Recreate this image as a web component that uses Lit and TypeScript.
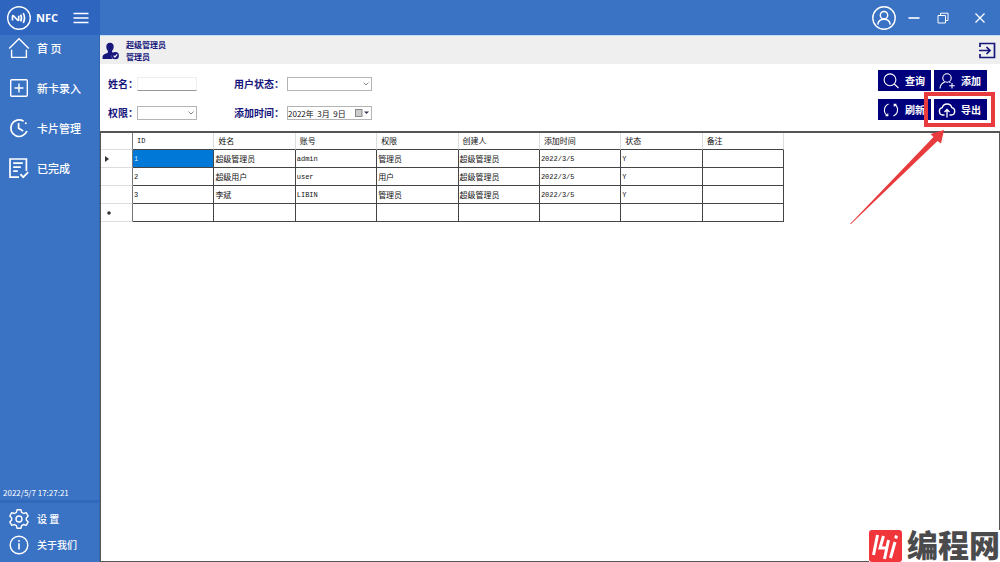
import { LitElement, html, css, svg } from "lit";
import { customElement, state } from "lit/decorators.js";

const icons = {
  nfc: svg`<svg viewBox="0 0 26 26" width="26" height="26"><circle cx="13" cy="13" r="11.3" stroke-width="1.4"/><path stroke-width="1.7" d="M6.5 15.6v-4.200q0-1.600 1.200-.4l3.800 4q1.200 1.200 1.200-.4v-3.800M14.600 9.600q1.800 3.400 0 6.800M17.200 8.200q2.600 4.800 0 9.600"/></svg>`,
  menu: svg`<svg viewBox="0 0 16 14" width="16" height="14"><path stroke-width="1.4" d="M.5 2.5h15M.5 7h15M.5 11.5h15"/></svg>`,
  home: svg`<svg viewBox="0 0 22 22" width="22" height="22"><path d="M1.200 11.600 11 1.800l9.800 9.800M3.600 12.800v7.600h14.800v-7.600"/></svg>`,
  plus: svg`<svg viewBox="0 0 22 22" width="22" height="22"><rect x="2.700" y="2.700" width="16.600" height="16.600" rx="1"/><path d="M11 6.500v9M6.500 11h9"/></svg>`,
  clock: svg`<svg viewBox="0 0 22 22" width="22" height="22"><path stroke-width="1.700" d="M15.600 4.200A8.300 8.300 0 1 0 18.900 14M10.600 6v5.300l4.600 2.700"/><circle cx="17.800" cy="6.300" r="1" fill="currentColor" stroke="none"/></svg>`,
  done: svg`<svg viewBox="0 0 22 22" width="22" height="22"><path stroke-width="1.700" d="M18.400 14V2H2v18.200h9M5.200 6.200h9.600M5.200 10.200h7.600M5.200 14.200h4.600M12.400 17.200l2.800 3 5-5"/></svg>`,
  gear: svg`<svg viewBox="0 0 22 22" width="22" height="22"><path stroke-linejoin="round" d="M9 1.800h4l.6 2.600 2 1.100 2.600-.8 2 3.400-1.900 1.900v2l1.900 1.900-2 3.400-2.600-.8-2 1.200-.6 2.500H9l-.6-2.500-2-1.200-2.600.8-2-3.400L3.700 12v-2L1.800 8.100l2-3.400 2.600.8 2-1.100z"/><circle cx="11" cy="11" r="3"/></svg>`,
  info: svg`<svg viewBox="0 0 22 22" width="22" height="22"><circle cx="11" cy="11" r="8.800"/><path stroke-width="1.600" d="M11 9.300v6.200M11 6v1.800"/></svg>`,
  account: svg`<svg viewBox="0 0 24 24" width="24" height="24"><circle cx="12" cy="12" r="11.200"/><circle cx="12" cy="9.200" r="3.700"/><path d="M5.700 18.600q.7-5.300 6.300-5.300t6.300 5.300"/></svg>`,
  minimize: svg`<svg viewBox="0 0 12 12" width="12" height="12"><path stroke-width="1.600" d="M.5 6h11"/></svg>`,
  restore: svg`<svg viewBox="0 0 12 12" width="12" height="12"><path stroke-width="1" d="M1 3.500h7.500V11H1zM3.500 3.500V1.200H11v7.300H8.500"/></svg>`,
  close: svg`<svg viewBox="0 0 12 12" width="12" height="12"><path stroke-width="1.300" d="m1.500 1.500 9 9M10.500 1.500l-9 9"/></svg>`,
  exit: svg`<svg viewBox="0 0 18 17" width="18" height="17"><path stroke-width="1.700" d="M2 5V1.500h14.500v14H2V12M1 8.500h10.500M8.500 5l3.500 3.500L8.500 12"/></svg>`,
  person: svg`<svg viewBox="0 0 18 18" width="18" height="18"><path fill="currentColor" stroke="none" d="M8 .8c2.500 0 3.900 1.700 3.700 4.100-.1 1.700-.8 2.900-1.500 3.800-.4.600-.2 1.400.6 1.700l1 .4a4.200 4.200 0 0 0-1.300 6.200H1.500c-.8 0-1-.5-1-1.300.1-3 1.700-3.400 4.300-4.400 1.200-.5 1.600-1.600.9-2.500C5 7.800 4.400 6.600 4.300 4.900 4.100 2.500 5.500.8 8 .8z"/><circle cx="13.300" cy="13.700" r="3.600" fill="currentColor" stroke="none"/><path stroke="#efefef" stroke-width="1.200" d="m11.600 13.700 1.300 1.300 2.300-2.600"/></svg>`,
  search: svg`<svg viewBox="0 0 18 18" width="18" height="18"><circle cx="8" cy="7.800" r="5.900"/><path d="m12.200 12 4.300 4"/></svg>`,
  add: svg`<svg viewBox="0 0 18 18" width="18" height="18"><circle cx="9" cy="6" r="4.200"/><path d="M2 16.500q.2-5 4.800-6.600M11.200 9.900l1.300.7M14 11v5.500M11.200 13.800h5.600"/></svg>`,
  refresh: svg`<svg viewBox="0 0 18 18" width="18" height="18"><path d="M6.600 3A6.600 6.600 0 0 0 5.200 14.500M3.500 14.700h2.300v-2.200M11.400 15A6.600 6.600 0 0 0 12.800 3.500M14.500 3.300h-2.300v2.200"/></svg>`,
  upload: svg`<svg viewBox="0 0 18 18" width="18" height="18"><path stroke-width="1.300" d="M6.500 14H4.700a3.700 3.700 0 0 1-.4-7.300 4.900 4.900 0 0 1 9.500 0 3.700 3.700 0 0 1-.4 7.300h-1.900M9 16.500V8.700M6.500 11 9 8.500l2.500 2.500"/></svg>`,
};

const columns = ["ID", "姓名", "账号", "权限", "创建人", "添加时间", "状态", "备注"];

const rows = [
  ["1", "超级管理员", "admin", "管理员", "超级管理员", "2022/3/5", "Y", ""],
  ["2", "超级用户", "user", "用户", "超级管理员", "2022/3/5", "Y", ""],
  ["3", "李斌", "LIBIN", "管理员", "超级管理员", "2022/3/5", "Y", ""],
  ["", "", "", "", "", "", "", ""],
];

const isLatin = (text: string) => /^[\x20-\x7e]+$/.test(text);

@customElement("app-root")
export class AppRoot extends LitElement {
  @state() private selected = 0;

  static styles = css`
    :host {
      display: grid;
      grid-template-columns: 100px 1fr;
      grid-template-rows: 35px 1fr;
      height: 100vh;
      position: relative;
      overflow: hidden;
      font-family: "Noto Sans CJK SC", sans-serif;
      background: #fff;
    }
    * { box-sizing: border-box; }
    svg { display: block; fill: none; stroke: currentColor; stroke-width: 1.4; flex: none; }
    button {
      border: 0; padding: 0; margin: 0; background: none;
      font: inherit; color: inherit; cursor: pointer;
    }
    .brand {
      display: flex; align-items: center; background: #2e66bf; color: #fff;
      padding: 0 11px 0 6px;
    }
    .brand-name {
      font: bold 11px/16px "Open Sans", sans-serif; margin: 0 auto 0 4px;
    }
    .titlebar {
      display: flex; align-items: center; justify-content: flex-end; gap: 12px;
      background: #3b73c4; color: #fff; padding-right: 14px;
    }
    .restore { margin: 0 13px 0 5px; }
    .sidebar {
      display: flex; flex-direction: column; background: #3b73c4; color: #fff;
      border-right: 1px solid #3567b0;
    }
    .nav { display: flex; flex-direction: column; gap: 18px; padding: 2px 8px; }
    .nav a {
      display: flex; align-items: center; gap: 7px; color: inherit;
      text-decoration: none; font-size: 11px; line-height: 22px; font-weight: 500;
      white-space: pre;
    }
    .clock { margin-top: auto; padding: 0 3px; font-size: 8px; line-height: 14px; }
    .nav.footer {
      gap: 4px; padding: 5px 8px 6px; border-top: 3px solid #3068bc;
    }
    .nav.footer a { font-size: 10px; }
    .main { display: flex; flex-direction: column; min-width: 0; }
    .userbar {
      display: flex; align-items: center; height: 29px; padding: 1px 4px 0 2px;
      background: #efefef; color: #17177c; border-top: 1px solid #c5dcf7;
    }
    .user { margin: 0 auto 0 6px; font-size: 8px; line-height: 12px; font-weight: 700; }
    .user p { margin: 0; }
    .filters {
      display: flex; justify-content: space-between; align-items: flex-start;
      height: 67px; padding: 6px 13px 0 8px; color: #15157c;
    }
    .fields {
      display: grid; grid-template-columns: 29px 60px 90px 85px;
      row-gap: 15px; padding-top: 7px; align-items: center;
    }
    .fields label { font-size: 10px; line-height: 14px; font-weight: 700; white-space: nowrap; }
    .fields label.wide { justify-self: end; width: 53px; }
    .field {
      display: block; width: 100%; height: 14px; margin: 0; padding: 0;
      border: 1px solid #b4b4b4; border-radius: 0; background: #fff; color: #111;
      font: 8px/12px "Noto Sans CJK SC", sans-serif; appearance: none; outline: none;
    }
    .field.line { border-color: #eee #eee #999 #eee; }
    .combo { display: grid; align-items: center; }
    .combo > * { grid-area: 1 / 1; }
    .combo > svg { justify-self: end; margin-right: 3px; color: #888; pointer-events: none; }
    .combo button { justify-self: end; margin-right: 3px; }
    .actions { display: grid; grid-template-columns: 53px 53px; gap: 8px 3px; }
    .action {
      display: flex; align-items: center; justify-content: space-between;
      height: 21px; padding: 0 6px 0 4px; background: #00007d; color: #fff;
      font-size: 10px; line-height: 14px; font-weight: 700; width: 100%;
    }
    .action svg { stroke-width: 1.1; }
    .marked { position: relative; }
    .frame {
      position: absolute; left: -10px; top: -7px; width: 71px; height: 35px;
      border: 4px solid #e73b3d; pointer-events: none;
    }
    .pointer { position: absolute; right: 43px; top: 31px; pointer-events: none; }
    .grid { flex: 1; border: 1px solid #555; border-top-width: 2px; overflow: auto; }
    table {
      border-collapse: separate; border-spacing: 0; table-layout: fixed; width: 683px;
      font-size: 8px; line-height: 14px; color: #111;
    }
    th, td {
      padding: 0 1px; text-align: left; font-weight: 400; white-space: nowrap;
      border-right: 1px solid #444; border-bottom: 1px solid #444; height: 18px;
    }
    thead th { height: 17px; padding: 0 4px; border-right-color: #ddd; }
    .mark {
      width: 32px; padding: 0 4px; border-bottom-color: #ddd;
      border-right-color: #777;
    }
    .mark svg { stroke: none; fill: #333; }
    .latin { font-family: "Liberation Mono", monospace; font-size: 7px; }
    .selected { background: #0078d7; color: #d5ecff; }
    .watermark {
      position: absolute; right: 0; bottom: 0; display: flex; align-items: flex-start;
      gap: 5px; background: #fff; color: #4b4b4d;
      font-size: 31px; line-height: 28px; font-weight: 900;
    }
  `;

  private nav(icon: unknown, label: string) {
    return html`<a href="#">${icon}<span>${label}</span></a>`;
  }

  private action(icon: unknown, label: string) {
    return html`<button class="action">${icon}<span>${label}</span></button>`;
  }

  private chevron() {
    return html`<svg viewBox="0 0 6 6" width="6" height="6"><path stroke-width="1" d="m.5 1.500 2.500 2.500 2.500-2.500"/></svg>`;
  }

  private marker(index: number) {
    if (index === this.selected) {
      return html`<svg viewBox="0 0 4 6" width="4" height="6"><path d="M0 0l4 3-4 3z"/></svg>`;
    }
    return index === rows.length - 1
      ? html`<svg viewBox="0 0 6 6" width="6" height="6"><circle cx="4" cy="3" r="1.800"/></svg>`
      : "";
  }

  render() {
    return html`
      <div class="brand">
        ${icons.nfc}<span class="brand-name">NFC</span>
        <button aria-label="菜单">${icons.menu}</button>
      </div>
      <header class="titlebar">
        <button aria-label="账户">${icons.account}</button>
        <button aria-label="最小化">${icons.minimize}</button>
        <button class="restore" aria-label="还原">${icons.restore}</button>
        <button aria-label="关闭">${icons.close}</button>
      </header>
      <aside class="sidebar">
        <nav class="nav">
          ${this.nav(icons.home, "首 页")} ${this.nav(icons.plus, "新卡录入")}
          ${this.nav(icons.clock, "卡片管理")} ${this.nav(icons.done, "已完成")}
        </nav>
        <time class="clock">2022/5/7 17:27:21</time>
        <nav class="nav footer">
          ${this.nav(icons.gear, "设 置")} ${this.nav(icons.info, "关于我们")}
        </nav>
      </aside>
      <main class="main">
        <div class="userbar">
          ${icons.person}
          <div class="user"><p>超级管理员</p><p>管理员</p></div>
          <button aria-label="退出">${icons.exit}</button>
        </div>
        <section class="filters">
          <div class="fields">
            <label for="name">姓名：</label>
            <input id="name" class="field line" type="text" />
            <label for="status" class="wide">用户状态：</label>
            <div class="combo">
              <select id="status" class="field"><option></option></select>${this.chevron()}
            </div>
            <label for="role">权限：</label>
            <div class="combo">
              <select id="role" class="field"><option></option></select>${this.chevron()}
            </div>
            <label for="date" class="wide">添加时间：</label>
            <div class="combo">
              <input id="date" class="field" type="text" .value=${"2022年  3月  9日"} />
              <button aria-label="选择日期">
                <svg viewBox="0 0 14 8" width="14" height="8"><rect x=".5" y=".5" width="6.500" height="7" fill="#ccc" stroke="#888" stroke-width="1"/><path d="M9 2.500h5L11.500 5z" fill="#335" stroke="none"/></svg>
              </button>
            </div>
          </div>
          <div class="actions">
            ${this.action(icons.search, "查询")} ${this.action(icons.add, "添加")}
            ${this.action(icons.refresh, "刷新")}
            <div class="marked">
              ${this.action(icons.upload, "导出")}
              <div class="frame"></div>
              <svg class="pointer" viewBox="0 0 94 94" width="94" height="94"><path fill="#e73b3d" stroke="none" d="M0 94 83.500 7 80.500 4 94 0 91 13.500 87.500 11 1 94z"/></svg>
            </div>
          </div>
        </section>
        <section class="grid">
          <table>
            <thead>
              <tr>
                <th class="mark"></th>
                ${columns.map((c) => html`<th class=${isLatin(c) ? "latin" : ""}>${c}</th>`)}
              </tr>
            </thead>
            <tbody>
              ${rows.map(
                (row, r) => html`<tr @click=${() => (this.selected = r)}>
                  <td class="mark">${this.marker(r)}</td>
                  ${row.map(
                    (text, c) => html`<td
                      class="${isLatin(text) ? "latin" : ""} ${r === this.selected && c === 0 ? "selected" : ""}"
                    >${text}</td>`
                  )}
                </tr>`
              )}
            </tbody>
          </table>
        </section>
      </main>
      <div class="watermark">
        <svg viewBox="0 0 33 32" width="33" height="32"><rect width="33" height="32" rx="3" fill="#f0353b" stroke="none"/><path stroke="#fff" stroke-width="3" d="M8.500 5 4.500 25M14.500 6l-3.500 12h7M19.500 10 15.500 29M26 12l-4.500 16M27.500 5.500l-.8 3"/></svg>
        <span>编程网</span>
      </div>
    `;
  }
}
